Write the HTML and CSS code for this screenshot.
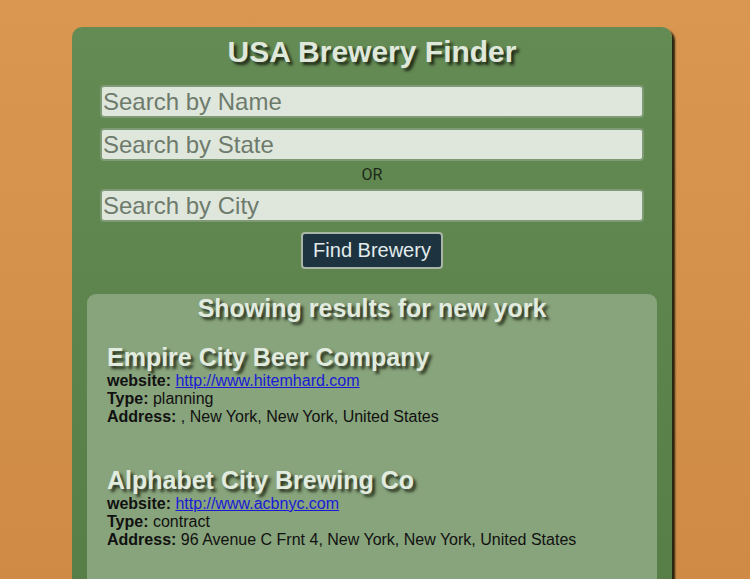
FILE: index.html
```html
<!DOCTYPE html>
<html>
<head>
<meta charset="utf-8">
<link rel="stylesheet" href="styles.css">
</head>
<body>
<main class="finder">
  <h1 class="title">USA Brewery Finder</h1>
  <form class="search">
    <input class="field" type="text" placeholder="Search by Name">
    <input class="field" type="text" placeholder="Search by State">
    <div class="or">OR</div>
    <input class="field" type="text" placeholder="Search by City">
    <button class="btn" type="button">Find Brewery</button>
  </form>
  <section class="results">
    <h2 class="results-title">Showing results for new york</h2>
    <article class="brewery">
      <h3 class="name">Empire City Beer Company</h3>
      <div class="line"><b>website:</b> <a href="#">http://www.hitemhard.com</a></div>
      <div class="line"><b>Type:</b> planning</div>
      <div class="line"><b>Address:</b> , New York, New York, United States</div>
    </article>
    <article class="brewery">
      <h3 class="name">Alphabet City Brewing Co</h3>
      <div class="line"><b>website:</b> <a href="#">http://www.acbnyc.com</a></div>
      <div class="line"><b>Type:</b> contract</div>
      <div class="line"><b>Address:</b> 96 Avenue C Frnt 4, New York, New York, United States</div>
    </article>
  </section>
</main>
</body>
</html>
```
FILE: styles.css
```css
html, body {
  margin: 0;
  padding: 0;
}
body {
  height: 579px;
  background: linear-gradient(180deg, #da9752 0%, #cf8b45 100%);
  font-family: "Liberation Sans", Arial, sans-serif;
  overflow: hidden;
}
.finder {
  width: 600px;
  margin: 27px 0 0 72px;
  padding: 0 0 40px;
  box-sizing: border-box;
  background: linear-gradient(180deg, #658b54 0%, #557c45 100%);
  border-radius: 10px;
  box-shadow: 3px 3px 2px rgba(20, 25, 10, 0.9);
}
.title {
  margin: 0;
  padding-top: 7px;
  text-align: center;
  font-size: 30px;
  line-height: 36px;
  font-weight: bold;
  color: #dfe8db;
  text-shadow: 3px 3px 3px #1f2a18;
}
.search {
  display: flex;
  flex-direction: column;
  align-items: center;
  margin-top: 15px;
}
.field {
  width: 544px;
  height: 33px;
  box-sizing: border-box;
  margin: 0 0 10px;
  padding: 0 0 0 1px;
  background: #dfe7dd;
  border: 2px solid #7f9a76;
  border-radius: 4px;
  font-family: "Liberation Sans", Arial, sans-serif;
  font-size: 24px;
  color: #333;
  outline: none;
}
.field::placeholder {
  color: #6e7b6c;
}
.or {
  margin: -6px 0 5px;
  font-family: Roboto, "Liberation Sans", sans-serif;
  font-size: 16px;
  line-height: 19px;
  color: #1c2a18;
}
.btn {
  margin-top: 0;
  height: 37px;
  padding: 0 10px;
  background: #1e3340;
  color: #e2ecec;
  border: 2px solid #a9b5a6;
  border-radius: 4px;
  font-family: "Liberation Sans", Arial, sans-serif;
  font-size: 20px;
}
.results {
  margin: 25px 15px 0;
  padding: 0 20px 40px;
  background: #88a47c;
  border-radius: 9px;
  min-height: 300px;
}
.results-title {
  margin: 0;
  text-align: center;
  font-size: 25px;
  line-height: 29px;
  font-weight: bold;
  color: #e2ebdf;
  text-shadow: 3px 3px 3px #2a3320;
}
.brewery {
  margin-top: 20px;
}
.brewery + .brewery {
  margin-top: 40px;
}
.name {
  margin: 0;
  font-size: 25px;
  line-height: 29px;
  font-weight: bold;
  color: #e2ebdf;
  text-shadow: 3px 3px 3px #2a3320;
}
.line {
  font-size: 16px;
  line-height: 18px;
  color: #111;
}
.line a {
  color: #1a1ad6;
}
```
